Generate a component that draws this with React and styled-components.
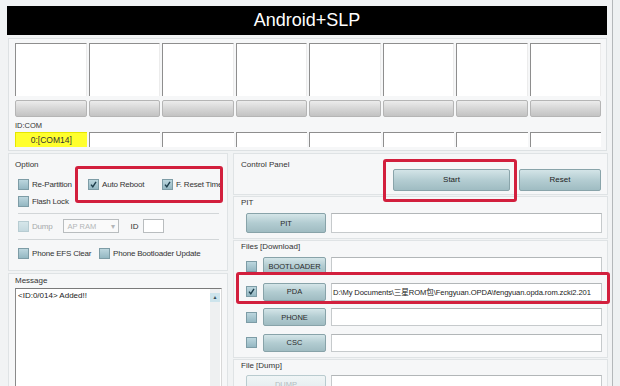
import styled, { createGlobalStyle } from "styled-components";

const GlobalStyle = createGlobalStyle`
  html, body {
    margin: 0;
    padding: 0;
    background: #eef1f2;
  }
  body {
    font-family: "Liberation Sans", Arial, "Noto Sans CJK SC", sans-serif;
    font-size: 8px;
    color: #2a2a2a;
  }
`;

const PORTS = [0, 1, 2, 3, 4, 5, 6, 7];

const FILES = [
  { name: "BOOTLOADER", checked: false, path: "" },
  {
    name: "PDA",
    checked: true,
    path: "D:\\My Documents\\三星ROM包\\Fengyuan.OPDA\\fengyuan.opda.rom.zcki2.201",
  },
  { name: "PHONE", checked: false, path: "" },
  { name: "CSC", checked: false, path: "" },
];

function Check({ checked, disabled }) {
  return (
    <Box disabled={disabled}>
      {checked && (
        <svg width="9" height="9" viewBox="0 0 9 9">
          <path d="M2 4.6 L3.8 6.8 L7 1.8" fill="none" stroke="#1d3d4b" strokeWidth="1.4" />
        </svg>
      )}
    </Box>
  );
}

function Option({ label, checked, disabled }) {
  return (
    <OptItem disabled={disabled}>
      <Check checked={checked} disabled={disabled} />
      <span>{label}</span>
    </OptItem>
  );
}

export default function App() {
  return (
    <Root>
      <GlobalStyle />
      <Window>
        <TitleBar>Android+SLP</TitleBar>

        <PortGroup>
          <PortGrid>
            {PORTS.map((i) => (
              <PortBox key={i} />
            ))}
          </PortGrid>
          <PortGrid gapTop={4}>
            {PORTS.map((i) => (
              <Progress key={i} />
            ))}
          </PortGrid>
          <IdLabel>ID:COM</IdLabel>
          <PortGrid>
            {PORTS.map((i) => (
              <ComCell key={i} active={i === 0}>
                {i === 0 ? "0:[COM14]" : ""}
              </ComCell>
            ))}
          </PortGrid>
        </PortGroup>

        <Bottom>
          <LeftCol>
            <OptionGroup>
              <GroupTitle>Option</GroupTitle>
              <OptRow top={7} cols="70px 74px 1fr">
                <Option label="Re-Partition" />
                <Option label="Auto Reboot" checked />
                <Option label="F. Reset Time" checked />
              </OptRow>
              <OptRow top={3} cols="1fr">
                <Option label="Flash Lock" />
              </OptRow>
              <Divider top={5} />
              <DumpRow>
                <Option label="Dump" disabled />
                <Select>
                  <span>AP RAM</span>
                  <span>▾</span>
                </Select>
                <IdText>ID</IdText>
                <IdInput />
              </DumpRow>
              <Divider top={6} />
              <OptRow top={6} cols="81px 1fr">
                <Option label="Phone EFS Clear" />
                <Option label="Phone Bootloader Update" />
              </OptRow>
            </OptionGroup>

            <MessageGroup>
              <GroupTitle>Message</GroupTitle>
              <MessageBox>
                <MessageText>&lt;ID:0/014&gt; Added!!</MessageText>
                <ScrollBar>
                  <ScrollUp>▲</ScrollUp>
                </ScrollBar>
              </MessageBox>
            </MessageGroup>
          </LeftCol>

          <RightCol>
            <ControlGroup>
              <GroupTitle>Control Panel</GroupTitle>
              <ControlButtons>
                <ActionButton width={117}>Start</ActionButton>
                <ActionButton width={82}>Reset</ActionButton>
              </ControlButtons>
            </ControlGroup>

            <FileGroup>
              <GroupTitle>PIT</GroupTitle>
              <FileRow top={5} height={20}>
                <FileButton width={80}>PIT</FileButton>
                <PathField />
              </FileRow>
            </FileGroup>

            <FileGroup>
              <GroupTitle>Files [Download]</GroupTitle>
              <FileList>
                {FILES.map((f) => (
                  <FileRow key={f.name} height={18}>
                    <Check checked={f.checked} />
                    <FileButton width={63}>{f.name}</FileButton>
                    <PathField>{f.path}</PathField>
                  </FileRow>
                ))}
              </FileList>
            </FileGroup>

            <FileGroup>
              <GroupTitle>File [Dump]</GroupTitle>
              <FileRow top={4} height={20}>
                <FileButton width={80} disabled>
                  DUMP
                </FileButton>
                <PathField />
              </FileRow>
            </FileGroup>
          </RightCol>
        </Bottom>
      </Window>

      <Marker left={75} top={166} width={148} height={37} />
      <Marker left={383} top={159} width={134} height={43} />
      <Marker left={236} top={272} width={374} height={32} />
    </Root>
  );
}

const Root = styled.div`
  position: relative;
  width: 620px;
  height: 386px;
  overflow: hidden;
  background: #eef1f2;
`;

const Window = styled.div`
  box-sizing: border-box;
  width: 613px;
  height: 386px;
  padding: 6px 4px 0 7px;
  border-right: 1px solid #b4b8ba;
  background: #f1f3f4;
`;

const TitleBar = styled.div`
  width: 600px;
  height: 29px;
  background: #000;
  color: #fff;
  font-size: 18px;
  line-height: 29px;
  text-align: center;
`;

const PortGroup = styled.div`
  box-sizing: border-box;
  width: 599px;
  margin: 3px 0 0 1px;
  padding: 4px 5px 3px 6px;
  border: 1px solid #dde1e3;
  background: #f6f7f8;
`;

const PortGrid = styled.div`
  display: grid;
  grid-template-columns: repeat(8, 1fr);
  gap: 2px;
  margin-top: ${(p) => p.gapTop || 0}px;
`;

const PortBox = styled.div`
  height: 52px;
  background: #fff;
  border-top: 1px solid #8e8e8e;
  border-left: 1px solid #8e8e8e;
  border-right: 1px solid #ececec;
`;

const Progress = styled.div`
  height: 15px;
  border: 1px solid #b5b5b5;
  border-radius: 2px;
  background: linear-gradient(#ececec, #d6d6d6 50%, #c3c3c3);
`;

const IdLabel = styled.div`
  margin-top: 3px;
  height: 12px;
  line-height: 12px;
  font-size: 7.5px;
  color: #333;
`;

const ComCell = styled.div`
  box-sizing: border-box;
  height: 15px;
  line-height: 14px;
  text-align: center;
  font-size: 8.5px;
  color: #333;
  background: ${(p) => (p.active ? "#ffff2e" : "#fff")};
  border-top: 1px solid ${(p) => (p.active ? "#e6e600" : "#8e8e8e")};
  border-left: 1px solid ${(p) => (p.active ? "#e6e600" : "#8e8e8e")};
`;

const Bottom = styled.div`
  display: flex;
  gap: 5px;
  width: 600px;
  margin: 2px 0 0 1px;
`;

const LeftCol = styled.div`
  display: flex;
  flex-direction: column;
  gap: 2px;
  width: 220px;
`;

const RightCol = styled.div`
  display: flex;
  flex-direction: column;
  gap: 1px;
  width: 375px;
`;

const Group = styled.div`
  box-sizing: border-box;
  border: 1px solid #dfe3e5;
  background: #f6f7f8;
`;

const GroupTitle = styled.div`
  height: 11px;
  line-height: 11px;
  font-size: 8px;
  color: #333;
  white-space: nowrap;
`;

const OptionGroup = styled(Group)`
  height: 118px;
  padding: 5px 5px 0 6px;
`;

const OptRow = styled.div`
  display: grid;
  grid-template-columns: ${(p) => p.cols};
  align-items: center;
  height: 14px;
  margin-top: ${(p) => p.top}px;
  padding-left: 3px;
  white-space: nowrap;
  overflow: hidden;
`;

const DumpRow = styled.div`
  display: flex;
  align-items: center;
  height: 14px;
  margin-top: 5px;
  padding-left: 3px;
  white-space: nowrap;
`;

const OptItem = styled.label`
  display: flex;
  align-items: center;
  gap: 3px;
  min-width: 0;
  overflow: hidden;
  letter-spacing: -0.2px;
  color: ${(p) => (p.disabled ? "#a5a9ab" : "#333")};
`;

const Box = styled.span`
  box-sizing: border-box;
  display: inline-flex;
  align-items: center;
  justify-content: center;
  width: 11px;
  height: 11px;
  flex: none;
  border: 1px solid ${(p) => (p.disabled ? "#b7ccd2" : "#7d9ca6")};
  background: ${(p) =>
    p.disabled
      ? "linear-gradient(#d6e6ea, #c4d9df)"
      : "linear-gradient(#bcd6de, #94b7c2)"};
`;

const Divider = styled.div`
  height: 1px;
  margin: ${(p) => p.top}px 3px 0 3px;
  background: #d2d6d8;
`;

const Select = styled.div`
  box-sizing: border-box;
  display: flex;
  justify-content: space-between;
  align-items: center;
  width: 56px;
  height: 14px;
  margin-left: 10px;
  padding: 0 3px 0 4px;
  border: 1px solid #b9bdbf;
  background: #fafafa;
  color: #b3b6b8;
  font-size: 7.5px;
`;

const IdText = styled.span`
  margin-left: 12px;
  color: #333;
`;

const IdInput = styled.div`
  box-sizing: border-box;
  width: 21px;
  height: 14px;
  margin-left: 4px;
  border: 1px solid #b9bdbf;
  background: #fff;
`;

const MessageGroup = styled(Group)`
  flex: 1;
  padding: 1px 5px 0 6px;
`;

const MessageBox = styled.div`
  box-sizing: border-box;
  display: flex;
  height: 110px;
  margin-top: 2px;
  border-top: 1px solid #7a7a7a;
  border-left: 1px solid #8a8a8a;
  border-right: 1px solid #d8d8d8;
  background: #fff;
`;

const MessageText = styled.div`
  flex: 1;
  padding: 2px 2px;
  font-size: 8px;
  color: #222;
`;

const ScrollBar = styled.div`
  width: 10px;
  margin-right: 1px;
  background: #eef0f1;
  padding-top: 4px;
`;

const ScrollUp = styled.div`
  height: 9px;
  line-height: 9px;
  text-align: center;
  font-size: 5px;
  color: #35515b;
  background: #cde4ec;
`;

const ControlGroup = styled(Group)`
  display: flex;
  justify-content: space-between;
  align-items: flex-start;
  height: 42px;
  padding: 5px 6px 0 7px;
`;

const ControlButtons = styled.div`
  display: flex;
  gap: 9px;
  margin-top: 10px;
`;

const ActionButton = styled.div`
  box-sizing: border-box;
  width: ${(p) => p.width}px;
  height: 22px;
  line-height: 20px;
  text-align: center;
  font-size: 8px;
  color: #222;
  border: 1px solid #89a4aa;
  border-radius: 2px;
  background: linear-gradient(#d3e4e7, #b4cdd2 50%, #9fbcc2);
`;

const FileGroup = styled(Group)`
  padding: 0 5px 5px 12px;

  & > ${GroupTitle} {
    margin-left: -5px;
  }
`;

const FileList = styled.div`
  display: flex;
  flex-direction: column;
  gap: 7.5px;
  margin-top: 5px;
`;

const FileRow = styled.div`
  display: flex;
  align-items: center;
  gap: 5px;
  height: ${(p) => p.height}px;
  margin-top: ${(p) => p.top || 0}px;

  & > ${Box} {
    margin-right: 1px;
  }
`;

const FileButton = styled.div`
  box-sizing: border-box;
  flex: none;
  width: ${(p) => p.width}px;
  height: 100%;
  display: flex;
  align-items: center;
  justify-content: center;
  font-size: 7.5px;
  color: ${(p) => (p.disabled ? "#b2bcbf" : "#2a2a2a")};
  border: 1px solid ${(p) => (p.disabled ? "#b9cbcf" : "#88a3a9")};
  border-radius: 2px;
  background: ${(p) =>
    p.disabled
      ? "linear-gradient(#f0f5f6, #e1eaec)"
      : "linear-gradient(#d4e5e8, #b2ccd1 50%, #a0bcc2)"};
`;

const PathField = styled.div`
  box-sizing: border-box;
  flex: 1;
  height: 100%;
  display: flex;
  align-items: center;
  padding-left: 1px;
  overflow: hidden;
  white-space: nowrap;
  font-size: 7.6px;
  letter-spacing: -0.1px;
  color: #222;
  border: 1px solid #c6cacc;
  border-top-color: #b2b6b8;
  background: #fff;
`;

const Marker = styled.div`
  position: absolute;
  left: ${(p) => p.left}px;
  top: ${(p) => p.top}px;
  width: ${(p) => p.width}px;
  height: ${(p) => p.height}px;
  box-sizing: border-box;
  border: 3px solid #d21f3d;
  border-radius: 3px;
  pointer-events: none;
`;
